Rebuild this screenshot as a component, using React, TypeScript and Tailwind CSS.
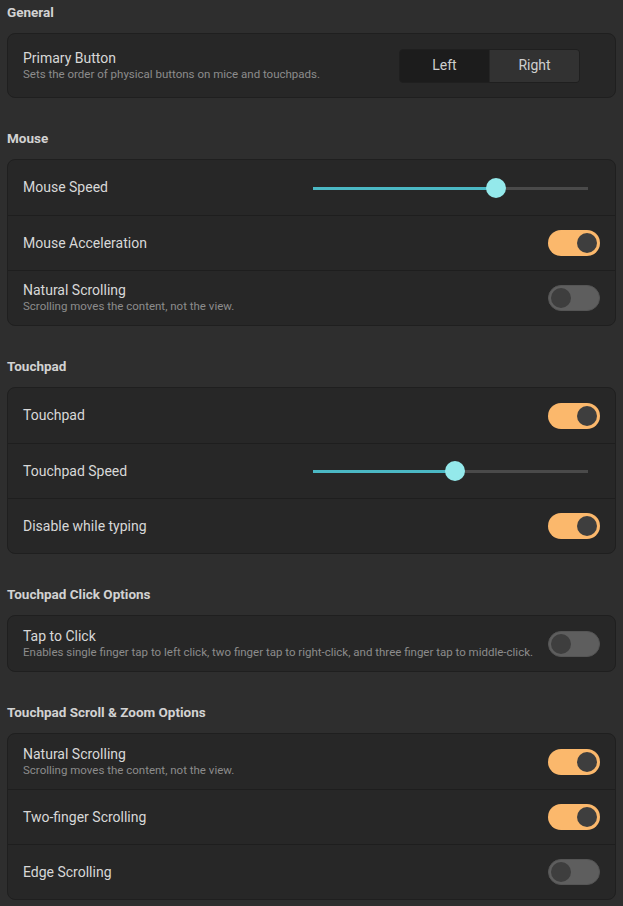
import React from "react";

const Toggle = ({ on }: { on: boolean }) =>
  on ? (
    <div className="flex h-[26px] w-[52px] items-center justify-end rounded-full bg-[#fbb86c] px-[3px]">
      <div className="h-[20px] w-[20px] rounded-full bg-[#3e3e3e]" />
    </div>
  ) : (
    <div className="flex h-[26px] w-[52px] items-center justify-start rounded-full border border-[#555] bg-[#5e5e5e] px-[2px]">
      <div className="h-[20px] w-[20px] rounded-full bg-[#3e3e3e]" />
    </div>
  );

const Slider = ({ pct }: { pct: number }) => (
  <div className="relative mr-[12px] h-[20px] w-[275px]">
    <div className="absolute left-0 right-0 top-[9px] h-[3px] bg-[#4a4a4a]" />
    <div className="absolute left-0 top-[9px] h-[3px] bg-[#4bb8c4]" style={{ width: `${pct}%` }} />
    <div
      className="absolute top-0 h-[20px] w-[20px] -translate-x-1/2 rounded-full bg-[#94e9eb]"
      style={{ left: `${pct}%` }}
    />
  </div>
);

const Row = ({
  title,
  sub,
  right,
  first,
}: {
  title: string;
  sub?: string;
  right: React.ReactNode;
  first?: boolean;
}) => (
  <div
    className={
      "flex h-[55px] items-center justify-between pl-[15px] pr-[15px] " +
      (first ? "" : "border-t border-[#1e1e1e]")
    }
  >
    <div className="flex flex-col">
      <div className="text-[14px] leading-[17px] text-[#d8d8d8]">{title}</div>
      {sub && <div className="text-[11.5px] leading-[15px] text-[#8c8c8c]">{sub}</div>}
    </div>
    {right}
  </div>
);

const Section = ({ title, children }: { title: string; children: React.ReactNode }) => (
  <div className="flex flex-col">
    <div className="h-[24px] pl-[7px] text-[13.5px] font-bold leading-[24px] text-[#d2d2d2]">{title}</div>
    <div className="mx-[7px] mt-[9px] overflow-hidden rounded-[8px] border border-[#1f1f1f] bg-[#272727]">
      {children}
    </div>
  </div>
);

export default function App() {
  return (
    <div
      className="flex min-h-[906px] w-[623px] flex-col gap-[28px] bg-[#2e2e2e]"
      style={{ fontFamily: "Roboto, 'Noto Sans', sans-serif" }}
    >
      <Section title="General">
        <div className="flex h-[63px] items-center justify-between pl-[15px] pr-[35px]">
          <div className="flex flex-col">
            <div className="text-[14px] leading-[17px] text-[#d8d8d8]">Primary Button</div>
            <div className="text-[11.5px] leading-[15px] text-[#8c8c8c]">
              Sets the order of physical buttons on mice and touchpads.
            </div>
          </div>
          <div className="flex h-[34px] w-[181px] overflow-hidden rounded-[4px] border border-[#1f1f1f]">
            <div className="flex flex-1 items-center justify-center bg-[#1c1c1c] text-[14px] text-[#cfcfcf]">
              Left
            </div>
            <div className="flex flex-1 items-center justify-center border-l border-[#262626] bg-[#323232] text-[14px] text-[#cfcfcf]">
              Right
            </div>
          </div>
        </div>
      </Section>
      <Section title="Mouse">
        <Row first title="Mouse Speed" right={<Slider pct={66.5} />} />
        <Row title="Mouse Acceleration" right={<Toggle on />} />
        <Row
          title="Natural Scrolling"
          sub="Scrolling moves the content, not the view."
          right={<Toggle on={false} />}
        />
      </Section>
      <Section title="Touchpad">
        <Row first title="Touchpad" right={<Toggle on />} />
        <Row title="Touchpad Speed" right={<Slider pct={51.6} />} />
        <Row title="Disable while typing" right={<Toggle on />} />
      </Section>
      <Section title="Touchpad Click Options">
        <Row
          first
          title="Tap to Click"
          sub="Enables single finger tap to left click, two finger tap to right-click, and three finger tap to middle-click."
          right={<Toggle on={false} />}
        />
      </Section>
      <Section title="Touchpad Scroll & Zoom Options">
        <Row
          first
          title="Natural Scrolling"
          sub="Scrolling moves the content, not the view."
          right={<Toggle on />}
        />
        <Row title="Two-finger Scrolling" right={<Toggle on />} />
        <Row title="Edge Scrolling" right={<Toggle on={false} />} />
      </Section>
    </div>
  );
}
